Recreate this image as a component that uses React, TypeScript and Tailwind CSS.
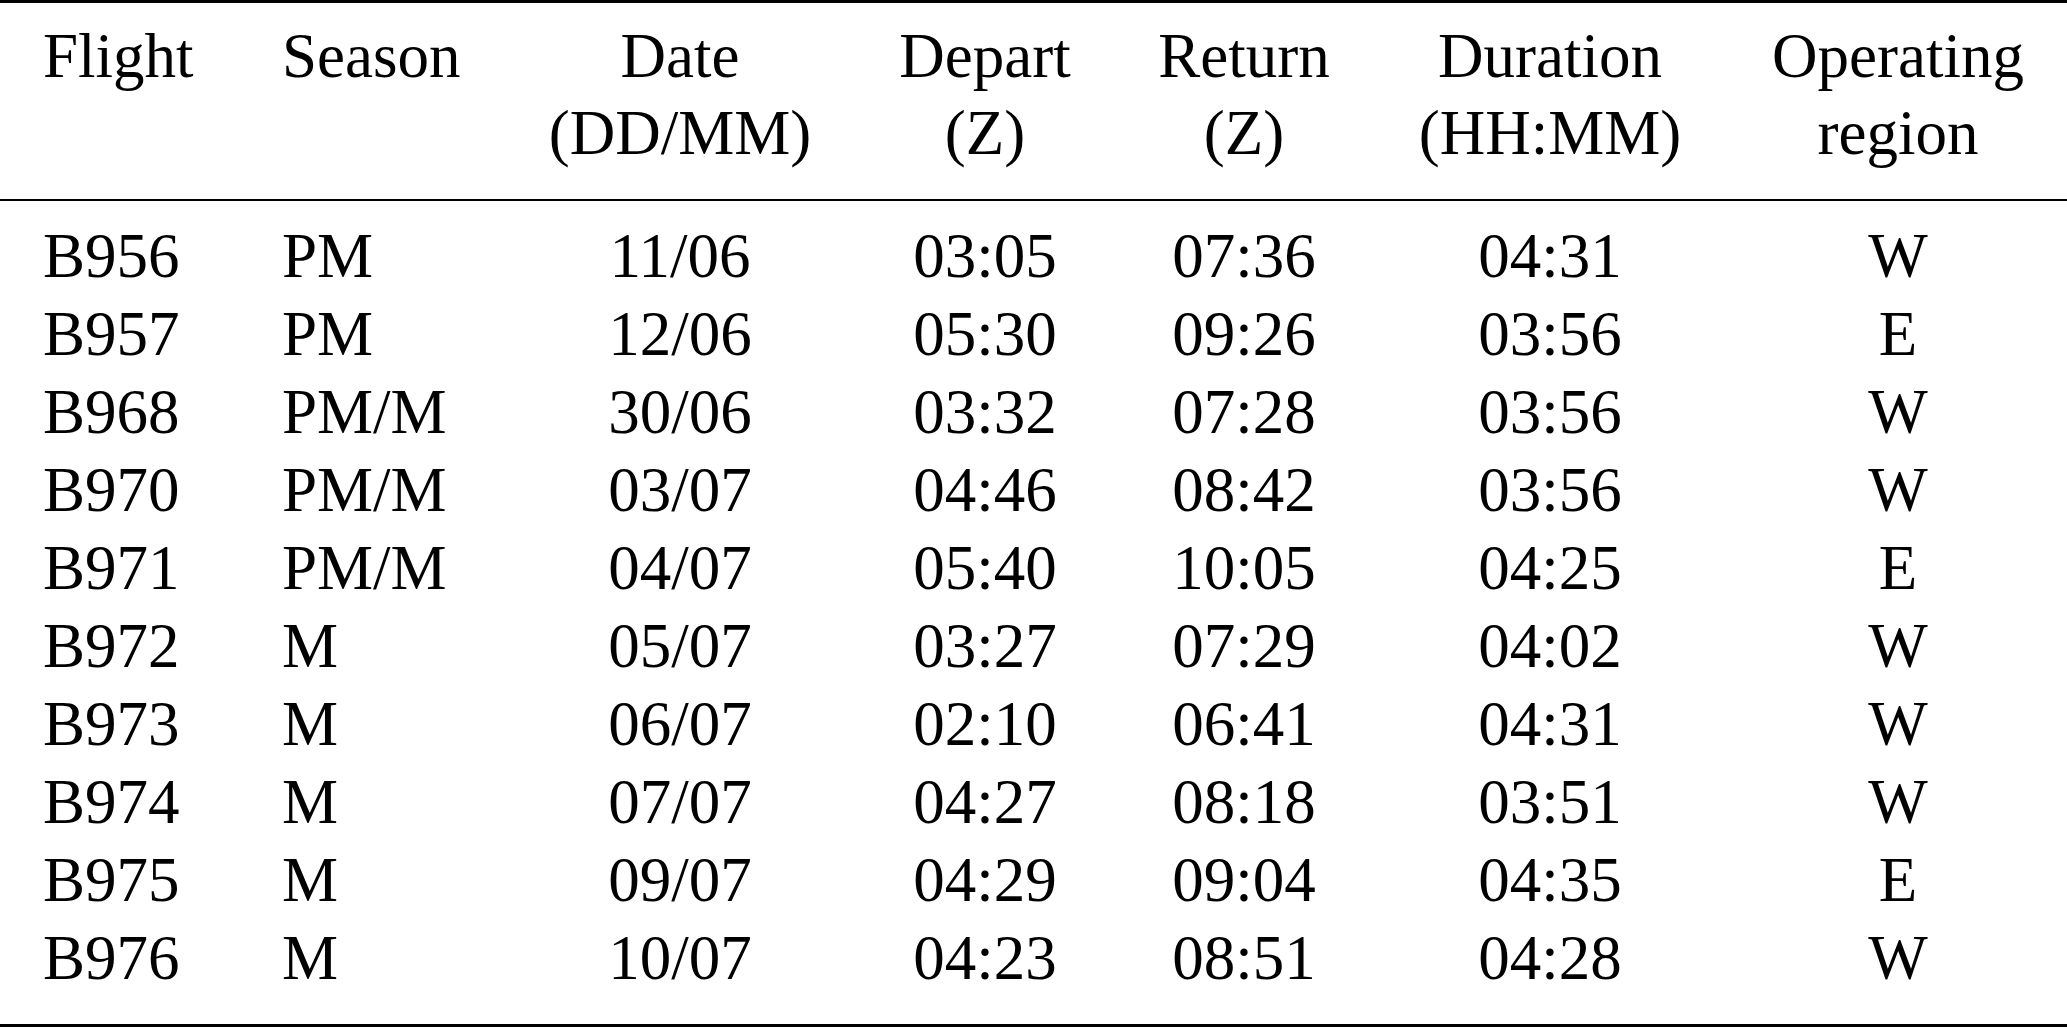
const rows = [
  ["B956", "PM", "11/06", "03:05", "07:36", "04:31", "W"],
  ["B957", "PM", "12/06", "05:30", "09:26", "03:56", "E"],
  ["B968", "PM/M", "30/06", "03:32", "07:28", "03:56", "W"],
  ["B970", "PM/M", "03/07", "04:46", "08:42", "03:56", "W"],
  ["B971", "PM/M", "04/07", "05:40", "10:05", "04:25", "E"],
  ["B972", "M", "05/07", "03:27", "07:29", "04:02", "W"],
  ["B973", "M", "06/07", "02:10", "06:41", "04:31", "W"],
  ["B974", "M", "07/07", "04:27", "08:18", "03:51", "W"],
  ["B975", "M", "09/07", "04:29", "09:04", "04:35", "E"],
  ["B976", "M", "10/07", "04:23", "08:51", "04:28", "W"],
];

const cols = "grid grid-cols-[239px_268px_346px_264px_254px_358px_1fr]";

export default function App() {
  return (
    <div className="w-[2067px] h-[1028px] bg-white text-black text-[63px] font-['Liberation_Serif','Times_New_Roman',serif]">
      <div className="border-t-[3px] border-black">
        <div className={`${cols} pt-[15px] pb-[27px] leading-[77px]`}>
          <div className="pl-[43px]">Flight</div>
          <div className="pl-[43px]">Season</div>
          <div className="text-center">Date<br />(DD/MM)</div>
          <div className="text-center">Depart<br />(Z)</div>
          <div className="text-center">Return<br />(Z)</div>
          <div className="text-center">Duration<br />(HH:MM)</div>
          <div className="text-center">Operating<br />region</div>
        </div>
        <div className="border-t-2 border-black" />
        <div className="pt-[16px] pb-[27px] leading-[78px]">
          {rows.map((r) => (
            <div key={r[0]} className={cols}>
              <div className="pl-[43px]">{r[0]}</div>
              <div className="pl-[43px]">{r[1]}</div>
              <div className="text-center">{r[2]}</div>
              <div className="text-center">{r[3]}</div>
              <div className="text-center">{r[4]}</div>
              <div className="text-center">{r[5]}</div>
              <div className="text-center">{r[6]}</div>
            </div>
          ))}
        </div>
        <div className="border-t-[3px] border-black" />
      </div>
    </div>
  );
}
